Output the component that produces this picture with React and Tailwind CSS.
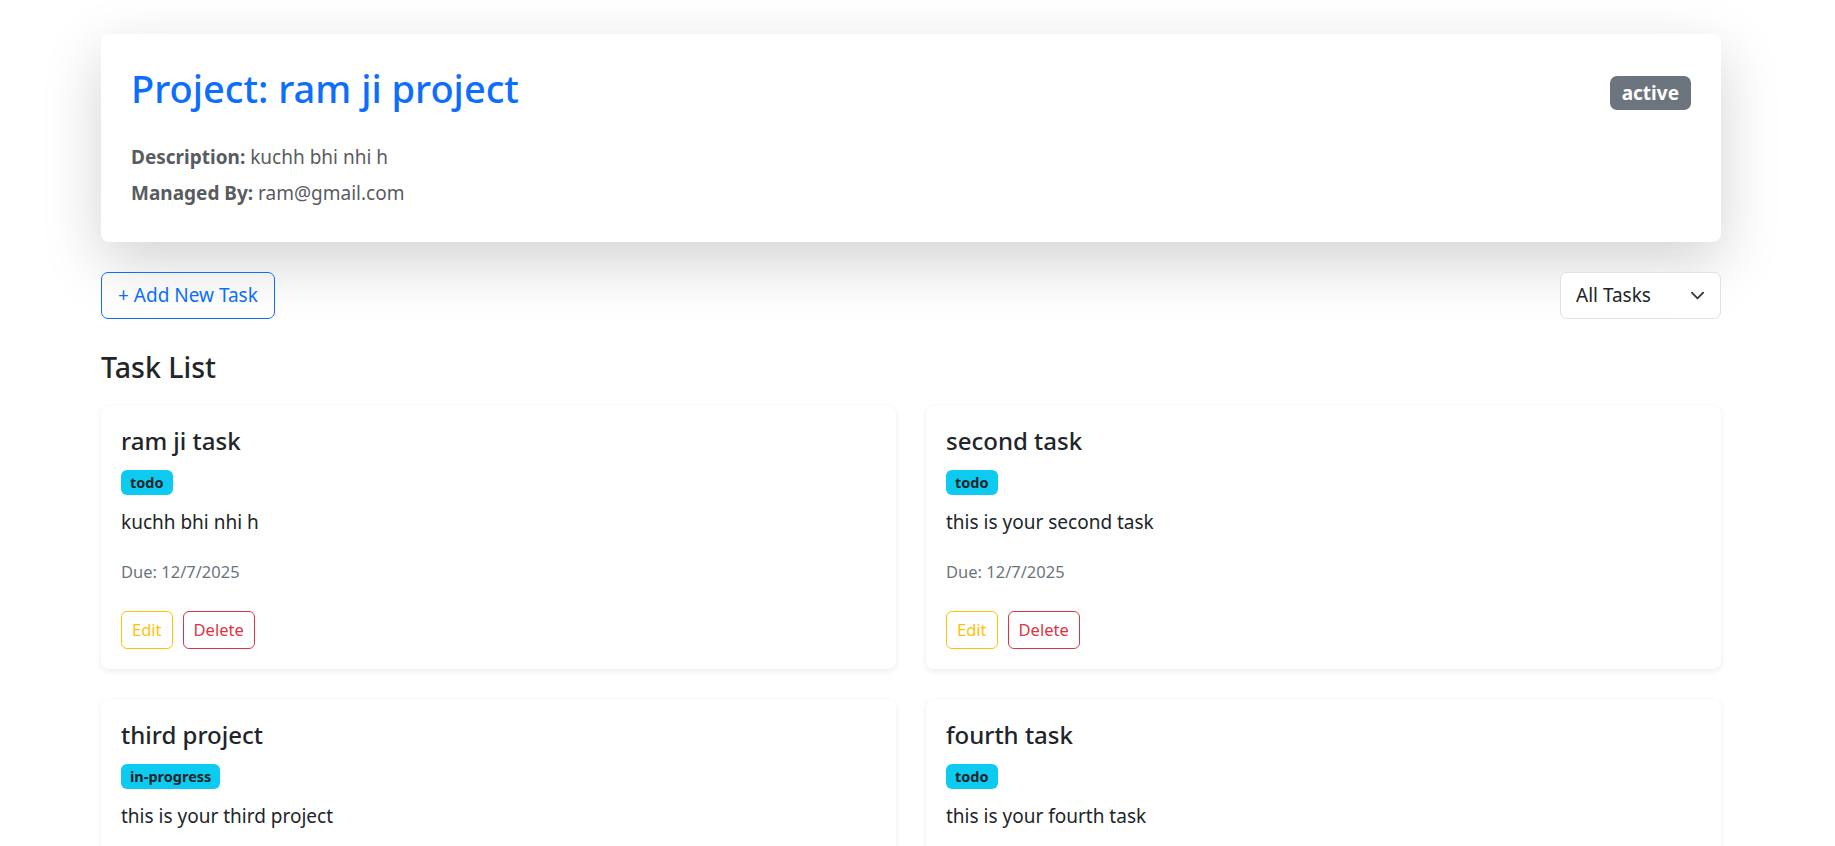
// Task data shown in the list
const tasks = [
  { id: 1, title: "ram ji task", status: "todo", description: "kuchh bhi nhi h", due: "12/7/2025" },
  { id: 2, title: "second task", status: "todo", description: "this is your second task", due: "12/7/2025" },
  { id: 3, title: "third project", status: "in-progress", description: "this is your third project", due: "12/7/2025" },
  { id: 4, title: "fourth task", status: "todo", description: "this is your fourth task", due: "12/7/2025" },
]

const TaskCard = ({ task }) => {
  return (
    <div className="rounded-[8px] bg-white p-5 shadow-[0_2px_6px_rgba(0,0,0,0.08)]">
      <h5 className="mb-[11px] text-[24px] leading-[30px] font-medium text-[#212529]">{task.title}</h5>
      <div className="mb-[10px] flex h-[30px] items-center">
        <span className="rounded-[6px] bg-[#0dcaf0] px-[9px] py-[5px] text-[14.5px] font-bold leading-[15px] text-[#212529]">
          {task.status}
        </span>
      </div>
      <p className="mb-5 text-[19px] leading-[30px] text-[#212529]">{task.description}</p>
      <p className="mb-6 flex h-[30px] items-center text-[16.5px] text-[#6c757d]">Due: {task.due}</p>
      <div className="flex gap-[10px]">
        <button className="h-[38px] rounded-[6px] border border-[#ffc107] px-[10px] text-[16.5px] text-[#ffc107]">
          Edit
        </button>
        <button className="h-[38px] rounded-[6px] border border-[#dc3545] px-[10px] text-[16.5px] text-[#dc3545]">
          Delete
        </button>
      </div>
    </div>
  )
}

export default function App() {
  return (
    <div className="h-screen overflow-hidden bg-white font-['Noto_Sans',sans-serif] text-[#212529]">
      <div className="ml-[101px] w-[1620px] pt-[34px]">
        {/* Project header */}
        <div className="mb-[30px] rounded-[8px] bg-white px-[30px] pt-[30px] pb-[34px] shadow-[0_20px_60px_rgba(0,0,0,0.175)]">
          <div className="mb-5 flex items-center justify-between">
            <h2 className="mb-[10px] text-[38px] leading-[48px] font-medium text-[#0d6efd]">Project: ram ji project</h2>
            <span className="rounded-[7px] bg-[#6c757d] px-[12px] py-[7px] text-[19px] font-bold leading-[20px] text-white">
              active
            </span>
          </div>
          <p className="mb-[6px] text-[19px] leading-[30px] text-[#595c5f]">
            <strong className="font-bold">Description:</strong> kuchh bhi nhi h
          </p>
          <p className="text-[19px] leading-[30px] text-[#595c5f]">
            <strong className="font-bold">Managed By:</strong> ram@gmail.com
          </p>
        </div>

        {/* Toolbar */}
        <div className="mb-[30px] flex items-center justify-between">
          <button className="flex h-[47px] items-center rounded-[7px] border border-[#0d6efd] px-4 text-[19px] text-[#0d6efd]">
            + Add New Task
          </button>
          <div className="flex h-[47px] w-[161px] items-center justify-between rounded-[7px] border border-[#dee2e6] bg-white pr-[15px] pl-[15px] text-[19px] text-[#212529]">
            <span>All Tasks</span>
            <svg width="15" height="15" viewBox="0 0 16 16" fill="none">
              <path d="m2 5 6 6 6-6" stroke="#343a40" strokeWidth="2" strokeLinecap="round" strokeLinejoin="round" />
            </svg>
          </div>
        </div>

        <h4 className="mb-[21px] text-[28.5px] leading-[36px] font-medium text-[#212529]">Task List</h4>

        <div className="grid grid-cols-2 gap-x-[30px] gap-y-[31px]">
          {tasks.map((task) => (
            <TaskCard key={task.id} task={task} />
          ))}
        </div>
      </div>
    </div>
  )
}
